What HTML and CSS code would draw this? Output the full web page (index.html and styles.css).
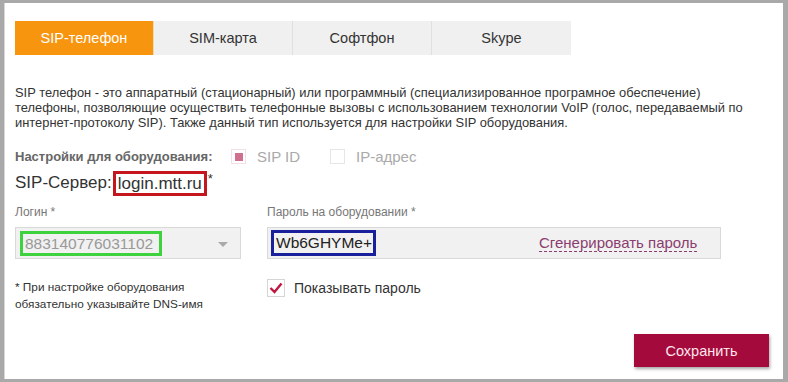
FILE: index.html
```html
<!DOCTYPE html>
<html lang="ru">
<head>
<meta charset="utf-8">
<link rel="stylesheet" href="styles.css">
</head>
<body>
<div class="frame">
  <div class="panel">
    <div class="tabs">
      <div class="tab active">SIP-телефон</div>
      <div class="tab">SIM-карта</div>
      <div class="tab">Софтфон</div>
      <div class="tab">Skype</div>
    </div>
    <p class="desc">SIP телефон - это аппаратный (стационарный) или программный (специализированное програмное обеспечение)<br>телефоны, позволяющие осуществить телефонные вызовы с использованием технологии VoIP (голос, передаваемый по<br>интернет-протоколу SIP). Также данный тип используется для настройки SIP оборудования.</p>
    <div class="settings">
      <span class="settings-label">Настройки для оборудования:</span>
      <span class="radio"><span class="box checked"></span>SIP ID</span>
      <span class="radio"><span class="box"></span>IP-адрес</span>
    </div>
    <div class="server">SIP-Сервер:<span class="server-val">login.mtt.ru</span><span class="ast">*</span></div>
    <div class="fields">
      <div class="field login">
        <div class="label">Логин *</div>
        <div class="select">
          <span class="login-val">883140776031102</span>
          <span class="caret"></span>
        </div>
      </div>
      <div class="field pass">
        <div class="label">Пароль на оборудовании *</div>
        <div class="input">
          <span class="pass-val">Wb6GHYMe+</span>
          <span class="gen">Сгенерировать пароль</span>
        </div>
      </div>
    </div>
    <div class="bottom">
      <div class="note">* При настройке оборудования<br>обязательно указывайте DNS-имя</div>
      <label class="show">
        <span class="chk"><svg width="14" height="12" viewBox="0 0 14 12"><path d="M1.5 6 L5.5 10 L12.5 1.5" fill="none" stroke="#c0163f" stroke-width="2.4"/></svg></span>
        Показывать пароль
      </label>
    </div>
    <div class="actions">
      <button class="save">Сохранить</button>
    </div>
  </div>
</div>
</body>
</html>
```
FILE: styles.css
```css
* { box-sizing: border-box; }
html, body { margin: 0; padding: 0; }
body {
  width: 788px;
  height: 382px;
  background: #a9a9a9;
  font-family: "Liberation Sans", Arial, sans-serif;
  color: #333;
}
.frame {
  padding: 3px 5px 3px 4px;
  height: 382px;
}
.panel {
  background: #fff;
  height: 376px;
  padding: 18px 10px 0 10px;
  border-left: 1px solid #d8d8d8;
}
.tabs {
  display: flex;
  height: 34px;
}
.tab {
  width: 139px;
  background: #f0f0f0;
  border-right: 1px solid #e0e0e0;
  display: flex;
  align-items: center;
  justify-content: center;
  font-size: 14.5px;
  color: #333;
}
.tab:last-child { border-right: 0; }
.tab.active {
  background: #f7950f;
  color: #fff;
  border-right: 1px solid #f0d9b5;
}
.desc {
  margin: 30px 0 0 0;
  font-size: 12.9px;
  line-height: 15px;
  color: #333;
  white-space: nowrap;
}
.settings {
  display: flex;
  align-items: center;
  margin-top: 18px;
  height: 16px;
  font-size: 13px;
}
.settings-label {
  font-weight: bold;
  color: #666;
  width: 216px;
}
.radio {
  display: flex;
  align-items: center;
  color: #aaa;
  font-size: 15px;
  width: 99px;
}
.box {
  width: 15px;
  height: 15px;
  border: 1px solid #e6e6e6;
  margin-right: 11px;
  background: #fff;
  position: relative;
}
.box.checked {
  border-color: #f3e0e6;
}
.box.checked::after {
  content: "";
  position: absolute;
  left: 3px; top: 3px;
  width: 8px; height: 8px;
  background: #d0708f;
}
.server {
  margin-top: 7px;
  font-size: 17px;
  color: #333;
  display: flex;
  align-items: center;
  height: 24px;
}
.server-val {
  border: 3px solid #c4161c;
  padding: 0 2px 0 2px;
  margin-left: 1px;
  height: 25px;
  line-height: 19px;
}
.ast { font-size: 13px; margin-left: 1px; align-self: flex-start; }
.fields {
  display: flex;
  margin-top: 10px;
}
.field .label {
  font-size: 12px;
  color: #777;
  height: 16px;
}
.login { width: 252px; }
.select, .input {
  margin-top: 6px;
  height: 32px;
  background: #f1f1f1;
  border: 1px solid #d9d9d9;
  display: flex;
  align-items: center;
  position: relative;
}
.select { width: 226px; padding-left: 4px; }
.login-val {
  border: 3px solid #3fd23f;
  height: 25px;
  width: 142px;
  font-size: 15.5px;
  color: #999;
  line-height: 19px;
  padding-left: 2px;
}
.caret {
  position: absolute;
  left: 202px;
  top: 14px;
  border-left: 5px solid transparent;
  border-right: 5px solid transparent;
  border-top: 5px solid #aaa;
}
.input { width: 454px; padding-left: 3px; }
.pass-val {
  border: 3px solid #1a1f9c;
  height: 26px;
  width: 105px;
  font-size: 15.5px;
  color: #222;
  line-height: 20px;
  padding-left: 2px;
}
.gen {
  margin-left: 163px;
  color: #8a3d6e;
  font-size: 15px;
  border-bottom: 1px dashed #8a3d6e;
  line-height: 16px;
}
.bottom {
  display: flex;
  margin-top: 20px;
}
.note {
  width: 252px;
  font-size: 11.8px;
  line-height: 17px;
  color: #333;
}
.show {
  display: flex;
  align-items: center;
  font-size: 14px;
  color: #333;
  height: 18px;
}
.chk {
  width: 18px;
  height: 18px;
  border: 1px solid #d5d5d5;
  display: flex;
  align-items: center;
  justify-content: center;
  margin-right: 9px;
  background: #fff;
}
.actions {
  display: flex;
  justify-content: flex-end;
  margin-top: 21px;
  padding-right: 4px;
}
.save {
  width: 135px;
  height: 33px;
  background: #a50a3c;
  border: 0;
  color: #fde6ee;
  font-family: "Liberation Sans", Arial, sans-serif;
  font-size: 14.5px;
  box-shadow: 1px 2px 3px rgba(0,0,0,0.35);
}
```
